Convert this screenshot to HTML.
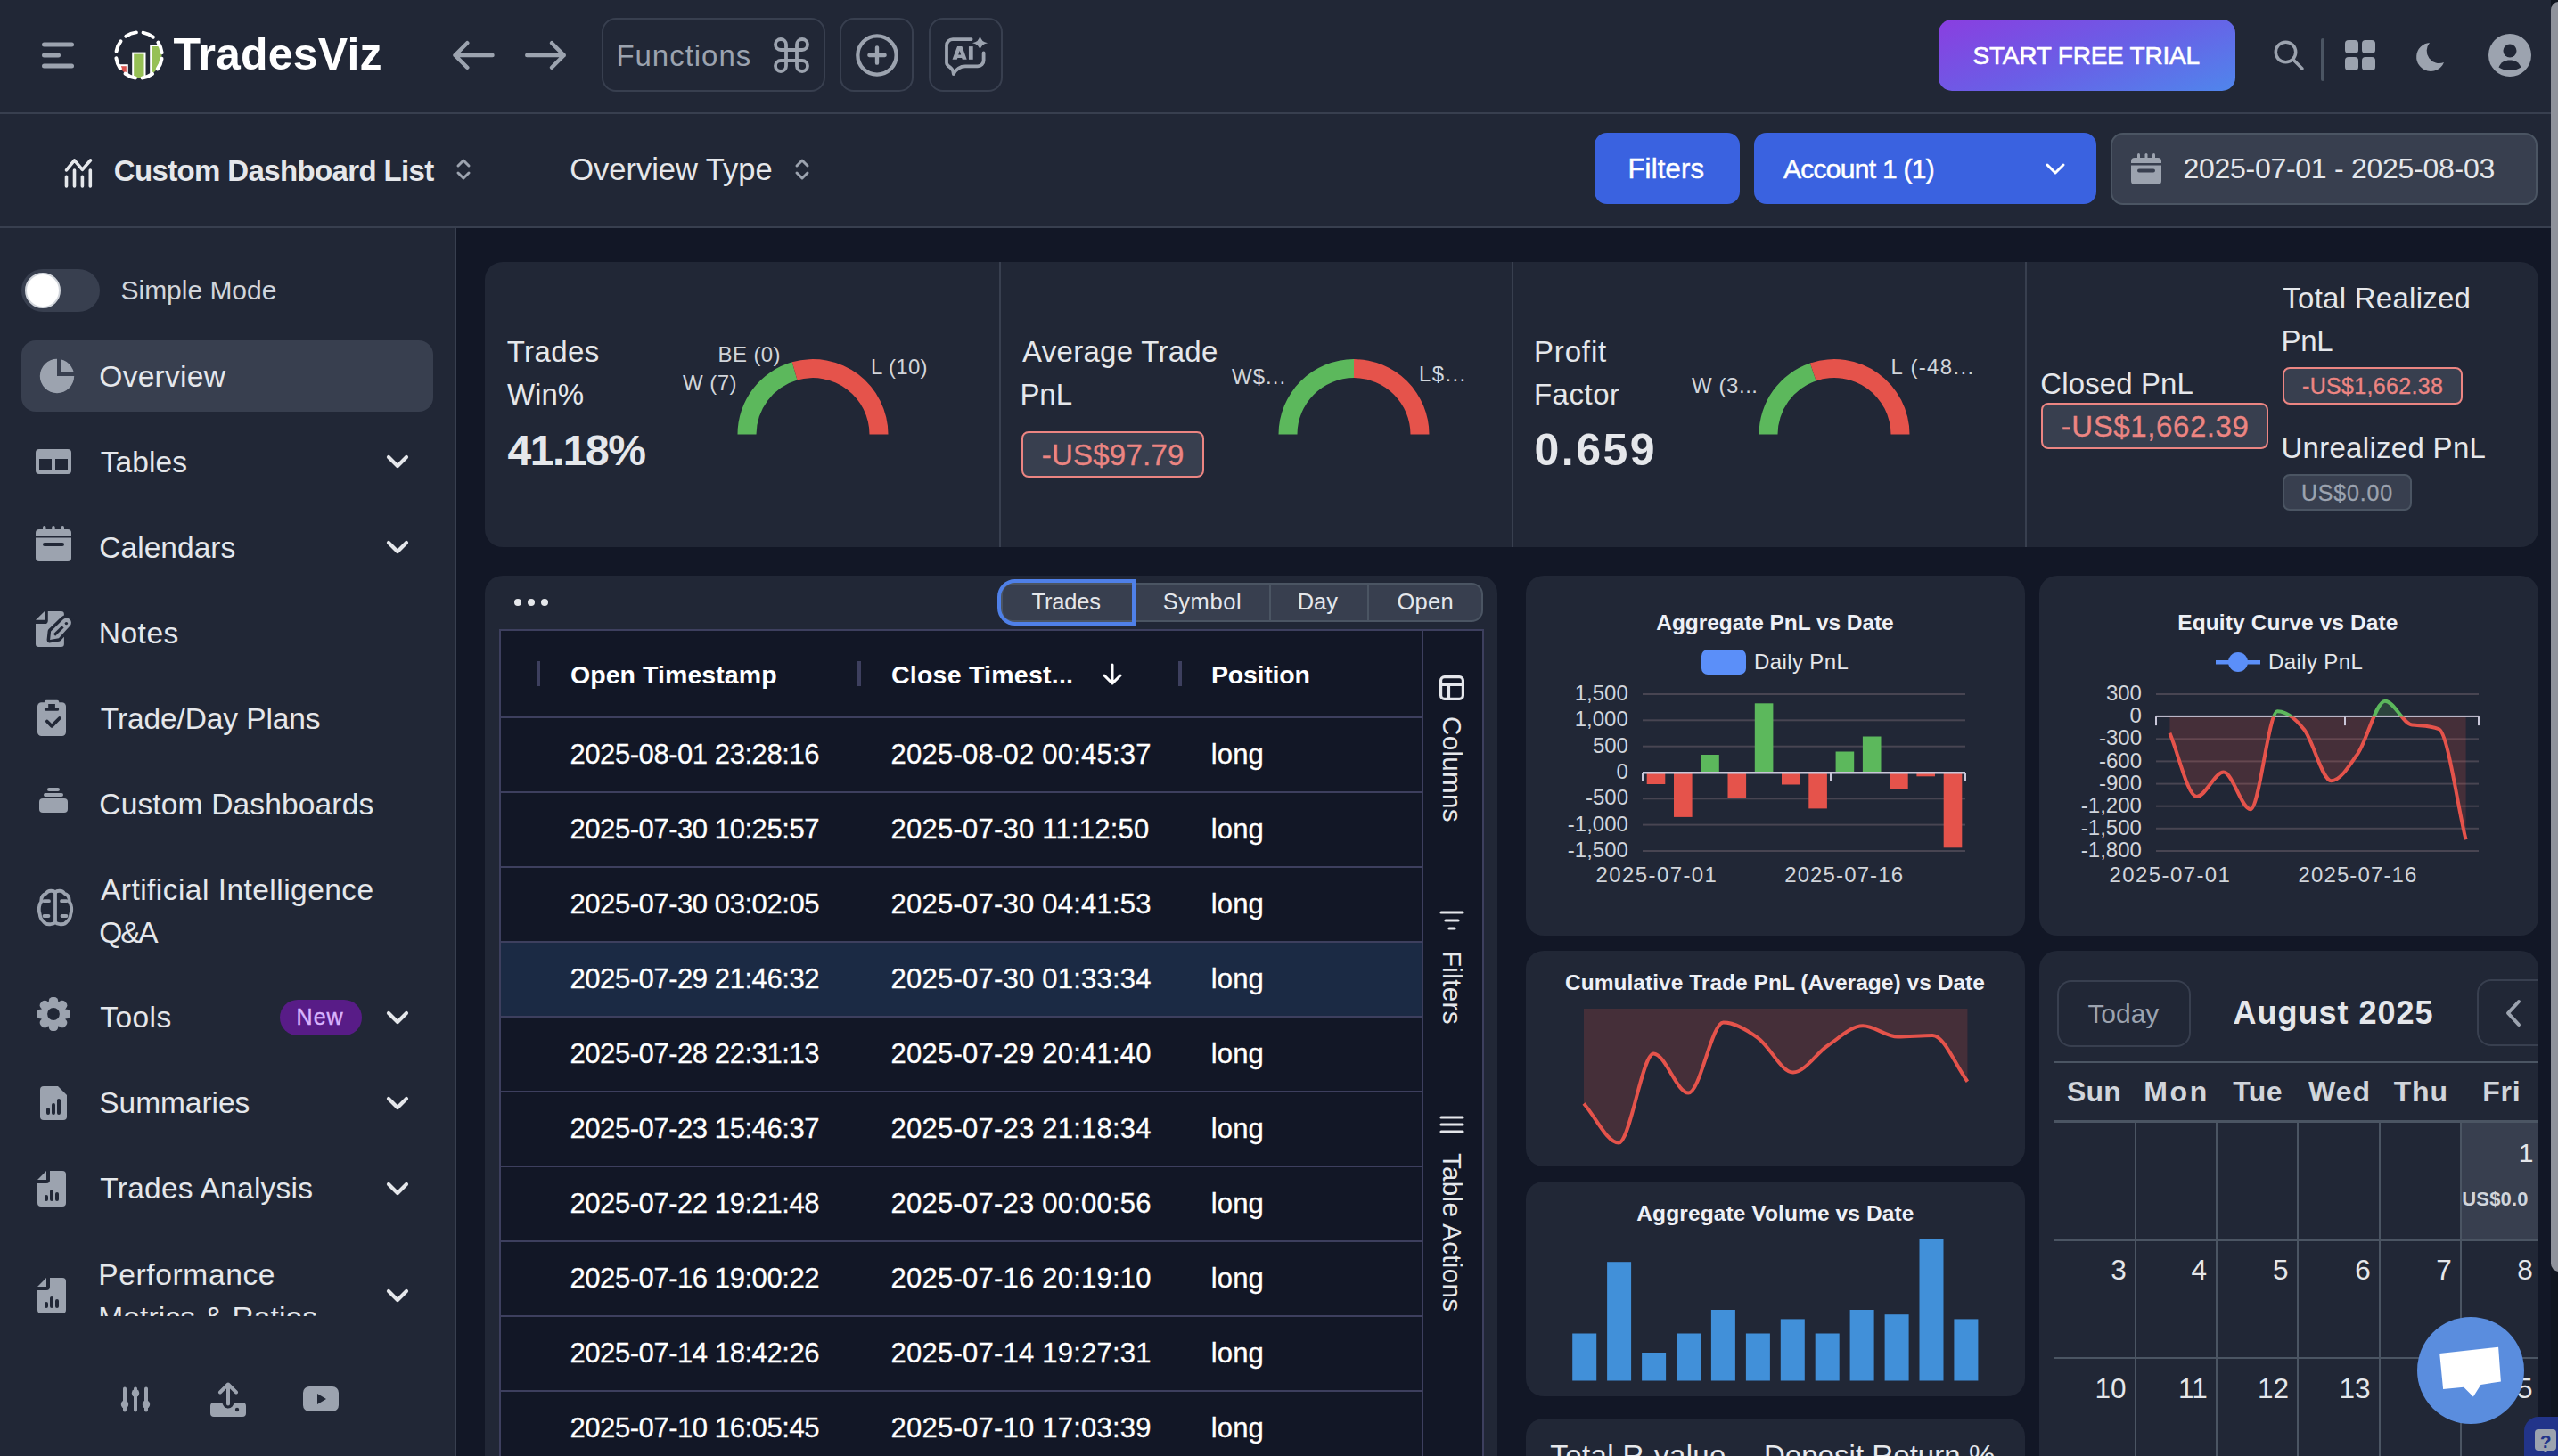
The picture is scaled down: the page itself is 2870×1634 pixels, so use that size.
<!DOCTYPE html>
<html><head><meta charset="utf-8"><title>TradesViz</title>
<style>
html,body{margin:0;padding:0;}
body{width:2870px;height:1634px;position:relative;overflow:hidden;background:#121726;font-family:'Liberation Sans', sans-serif;}
.t{position:absolute;white-space:nowrap;font-family:'Liberation Sans', sans-serif;}
svg{overflow:visible;}
</style></head><body>
<div style="position:absolute;left:0px;top:0px;width:2870px;height:126px;background:#212736;border-radius:0px;"></div>
<div style="position:absolute;left:0px;top:126px;width:2870px;height:2px;background:#383f4f;border-radius:0px;"></div>
<svg style="position:absolute;left:40px;top:40px;" width="50" height="44" viewBox="0 0 50 44"><g stroke="#9ca3af" stroke-width="5" stroke-linecap="round"><line x1="9.5" y1="10" x2="40.5" y2="10"/><line x1="9.5" y1="22" x2="25.5" y2="22"/><line x1="9.5" y1="34" x2="40.5" y2="34"/></g></svg>
<svg style="position:absolute;left:124px;top:30px;" width="64" height="64" viewBox="0 0 64 64">
<defs><clipPath id="lc"><circle cx="32" cy="32" r="25.5"/></clipPath></defs>
<g clip-path="url(#lc)">
<rect x="10.8" y="43.2" width="8" height="14" fill="#d9534f" stroke="#fff" stroke-width="2"/>
<rect x="25.2" y="29.6" width="13.3" height="32" fill="#96c055" stroke="#fff" stroke-width="2"/>
<rect x="45.2" y="21" width="14" height="40" fill="#96c055" stroke="#fff" stroke-width="2"/>
</g>
<circle cx="32" cy="32" r="25.8" fill="none" stroke="#fff" stroke-width="4" stroke-linecap="round" stroke-dasharray="12.3 7.96" stroke-dashoffset="16.28"/>
</svg>
<div class="t" style="left:194.5px;top:36.1px;font-size:50px;line-height:50px;color:#ffffff;font-weight:700;letter-spacing:0.19px;">TradesViz</div>
<svg style="position:absolute;left:500px;top:40px;" width="64" height="44" viewBox="0 0 64 44"><g stroke="#9ca3af" stroke-width="4.5" stroke-linecap="round" stroke-linejoin="round" fill="none"><path d="M52.5 22H10.5M24.25 8.25L10.5 22L24.25 35.75"/></g></svg>
<svg style="position:absolute;left:580px;top:40px;" width="64" height="44" viewBox="0 0 64 44"><g stroke="#9ca3af" stroke-width="4.5" stroke-linecap="round" stroke-linejoin="round" fill="none"><path d="M11.25 22H52.75M39 8.25L52.75 22L39 35.75"/></g></svg>
<div style="position:absolute;left:675px;top:20px;width:251px;height:83px;background:transparent;border-radius:16px;border:2px solid #383f4f;box-sizing:border-box;"></div>
<div class="t" style="left:691.4px;top:46.0px;font-size:33px;line-height:33px;color:#9ca3af;letter-spacing:0.97px;">Functions</div>
<svg style="position:absolute;left:864px;top:38px;" width="48" height="48" viewBox="0 0 24 24"><path d="M15 6v12a3 3 0 1 0 3-3H6a3 3 0 1 0 3 3V6a3 3 0 1 0-3 3h12a3 3 0 1 0-3-3" fill="none" stroke="#9ca3af" stroke-width="1.9" stroke-linecap="round" stroke-linejoin="round"/></svg>
<div style="position:absolute;left:942px;top:20px;width:83px;height:83px;background:transparent;border-radius:16px;border:2px solid #383f4f;box-sizing:border-box;"></div>
<svg style="position:absolute;left:958px;top:36px;" width="52" height="52" viewBox="0 0 24 24"><g fill="none" stroke="#9ca3af" stroke-width="2" stroke-linecap="round"><circle cx="12" cy="12" r="10"/><path d="M8 12h8M12 8v8"/></g></svg>
<div style="position:absolute;left:1042px;top:20px;width:83px;height:83px;background:transparent;border-radius:16px;border:2px solid #383f4f;box-sizing:border-box;"></div>
<svg style="position:absolute;left:1056px;top:38px;" width="56" height="48" viewBox="0 0 56 48"><path d="M33.6 6.05 H13 A7 7 0 0 0 6 13.05 V32.5 C6 35 8 36.2 10 37.5 C12.5 39.5 13.8 42 13.8 45 C16 41 20 36.3 27 36.3 H41 A6.6 6.6 0 0 0 47.6 29.7 V21.4" fill="none" stroke="#9ca3af" stroke-width="3.8" stroke-linecap="round" stroke-linejoin="round"/>
<path fill-rule="evenodd" d="M12.5 28.8 L18.05 14.1 L23.4 14.1 L28.7 28.8 L23.8 28.8 L23.1 26.9 L18.4 26.9 L17.7 28.8 Z M19.2 23.4 L20.7 18.9 L22.2 23.4 Z" fill="#9ca3af"/>
<rect x="30.95" y="14.1" width="4.75" height="14.7" fill="#9ca3af"/>
<path d="M43.5 1.6 Q44.5 9.3 52.1 10.3 Q44.5 11.3 43.5 19 Q42.5 11.3 34.9 10.3 Q42.5 9.3 43.5 1.6 Z" fill="#9ca3af"/></svg>
<div style="position:absolute;left:2175px;top:22px;width:333px;height:80px;background:linear-gradient(160deg,#8a3ee0 0%,#6a5ee6 50%,#4f86ec 100%);border-radius:15px;"></div>
<div class="t" style="left:2213.6px;top:48.7px;font-size:28px;line-height:28px;color:#ffffff;letter-spacing:-0.22px;-webkit-text-stroke:0.6px #fff;">START FREE TRIAL</div>
<svg style="position:absolute;left:2546px;top:40px;" width="44" height="44" viewBox="0 0 44 44"><g fill="none" stroke="#9ca3af" stroke-width="3.5" stroke-linecap="round"><circle cx="18.5" cy="18.5" r="11.2"/><path d="M27 27L37 37"/></g></svg>
<div style="position:absolute;left:2604px;top:43px;width:4px;height:48px;background:#4b5563;border-radius:2px;"></div>
<svg style="position:absolute;left:2631px;top:45px;" width="34" height="34" viewBox="0 0 34 34"><g fill="#9ca3af"><rect x="0" y="0" width="15" height="15" rx="4"/><rect x="19" y="0" width="15" height="15" rx="4"/><rect x="0" y="19" width="15" height="15" rx="4"/><rect x="19" y="19" width="15" height="15" rx="4"/></g></svg>
<svg style="position:absolute;left:2706px;top:44px;" width="40" height="38" viewBox="0 0 40 38"><path d="M20 4 A16 16 0 1 0 36 26 A14 14 0 0 1 20 4 Z" fill="#9ca3af"/></svg>
<svg style="position:absolute;left:2792px;top:38px;" width="48" height="48" viewBox="0 0 48 48"><circle cx="24" cy="24" r="24" fill="#9ca3af"/><circle cx="24" cy="19" r="7.5" fill="#212736"/><path d="M11.5 37.5 C14 31.5 18.5 29.5 24 29.5 C29.5 29.5 34 31.5 36.5 37.5 C33 40 28.5 41 24 41 C19.5 41 15 40 11.5 37.5Z" fill="#212736"/></svg>
<div style="position:absolute;left:0px;top:128px;width:2870px;height:126px;background:#212736;border-radius:0px;"></div>
<div style="position:absolute;left:0px;top:254px;width:2870px;height:2px;background:#383f4f;border-radius:0px;"></div>
<svg style="position:absolute;left:70px;top:176px;" width="36" height="36" viewBox="0 0 36 36"><g stroke="#e5e7eb" stroke-width="3.6" stroke-linecap="round" stroke-linejoin="round" fill="none"><path d="M4.5 32.9V22.4M13.5 32.9V15.1M22.4 32.9V22.4M31.3 32.9V15.1M4.5 14.8L13.5 3.8L22.4 14.4L31.6 3.8"/></g></svg>
<div class="t" style="left:127.7px;top:174.5px;font-size:33px;line-height:33px;color:#e5e7eb;font-weight:700;letter-spacing:-0.63px;">Custom Dashboard List</div>
<svg style="position:absolute;left:512px;top:177px;" width="16" height="26" viewBox="0 0 16 26"><g stroke="#9ca3af" stroke-width="3" stroke-linecap="round" stroke-linejoin="round" fill="none"><path d="M2 9L8 3L14 9M2 17L8 23L14 17"/></g></svg>
<div class="t" style="left:639.3px;top:173.3px;font-size:34.5px;line-height:34.5px;color:#e5e7eb;letter-spacing:-0.02px;">Overview Type</div>
<svg style="position:absolute;left:892px;top:177px;" width="16" height="26" viewBox="0 0 16 26"><g stroke="#9ca3af" stroke-width="3" stroke-linecap="round" stroke-linejoin="round" fill="none"><path d="M2 9L8 3L14 9M2 17L8 23L14 17"/></g></svg>
<div style="position:absolute;left:1789px;top:149px;width:163px;height:80px;background:#3a62e0;border-radius:14px;"></div>
<div class="t" style="left:1826.5px;top:173.7px;font-size:31px;line-height:31px;color:#ffffff;letter-spacing:0.18px;-webkit-text-stroke:0.5px #fff;">Filters</div>
<div style="position:absolute;left:1968px;top:149px;width:384px;height:80px;background:#3a62e0;border-radius:14px;"></div>
<div class="t" style="left:2001.0px;top:174.5px;font-size:30px;line-height:30px;color:#ffffff;letter-spacing:-0.72px;-webkit-text-stroke:0.5px #fff;">Account 1 (1)</div>
<svg style="position:absolute;left:2294px;top:180px;" width="24" height="20" viewBox="0 0 24 20"><path d="M3 5L12 14L21 5" fill="none" stroke="#fff" stroke-width="3" stroke-linecap="round" stroke-linejoin="round"/></svg>
<div style="position:absolute;left:2368px;top:149px;width:479px;height:81px;background:#383f4f;border-radius:14px;border:2px solid #4b5563;box-sizing:border-box;"></div>
<svg style="position:absolute;left:2391px;top:172px;" width="34" height="35" viewBox="0 0 34 35"><g fill="#9ca3af"><rect x="0" y="5" width="34" height="30" rx="4"/><rect x="7" y="0" width="3" height="8" rx="1.5"/><rect x="15.5" y="0" width="3" height="8" rx="1.5"/><rect x="24" y="0" width="3" height="8" rx="1.5"/></g><rect x="0" y="11" width="34" height="2.5" fill="#383f4f"/><rect x="7" y="17.5" width="20" height="4" rx="2" fill="#383f4f"/></svg>
<div class="t" style="left:2449.4px;top:172.5px;font-size:32px;line-height:32px;color:#e5e7eb;letter-spacing:-0.27px;">2025-07-01 - 2025-08-03</div>
<div style="position:absolute;left:0px;top:256px;width:510px;height:1378px;background:#212736;border-radius:0px;"></div>
<div style="position:absolute;left:510px;top:256px;width:2px;height:1378px;background:#383f4f;border-radius:0px;"></div>
<div style="position:absolute;left:24px;top:302px;width:88px;height:48px;background:#383f4f;border-radius:24px;"></div>
<div style="position:absolute;left:28px;top:306px;width:40px;height:40px;border-radius:50%;background:#fff;box-sizing:border-box;border:2px solid #d1d5db;"></div>
<div class="t" style="left:135.5px;top:310.8px;font-size:30px;line-height:30px;color:#d1d5db;letter-spacing:-0.02px;">Simple Mode</div>
<div style="position:absolute;left:24px;top:382px;width:462px;height:80px;background:#383f4f;border-radius:16px;"></div>
<svg style="position:absolute;left:45px;top:403px;" width="38" height="38" viewBox="0 0 38 38"><defs><clipPath id="pw"><rect x="23.9" y="-2" width="20" height="16.2"/></clipPath></defs><path d="M19 19 V-0.2 A19.2 19.2 0 1 0 38.2 19 Z" fill="#9ca3af"/><circle cx="19" cy="19" r="19.2" fill="#9ca3af" clip-path="url(#pw)"/></svg>
<div class="t" style="left:111.3px;top:405.5px;font-size:33.5px;line-height:33.5px;color:#e5e7eb;letter-spacing:0.28px;">Overview</div>
<div style="position:absolute;left:0;top:470px;width:510px;height:1007px;overflow:hidden;">
<svg style="position:absolute;left:40px;top:34px;" width="40" height="28" viewBox="0 0 40 28"><rect x="0" y="0" width="40" height="28" rx="4" fill="#9ca3af"/><rect x="4" y="11" width="14" height="13" fill="#212736"/><rect x="22" y="11" width="14" height="13" fill="#212736"/></svg>
<div class="t" style="left:112.8px;top:31.5px;font-size:33.5px;line-height:33.5px;color:#e5e7eb;letter-spacing:0.07px;">Tables</div>
<svg style="position:absolute;left:432px;top:38px;" width="28" height="20" viewBox="0 0 28 20"><path d="M4 5L14 15L24 5" fill="none" stroke="#e5e7eb" stroke-width="4.2" stroke-linecap="round" stroke-linejoin="round"/></svg>
<svg style="position:absolute;left:40px;top:120px;" width="40" height="40" viewBox="0 0 40 40"><g fill="#9ca3af"><rect x="0" y="4" width="40" height="36" rx="4"/><rect x="8" y="0" width="3.5" height="8" rx="1.7"/><rect x="18.2" y="0" width="3.5" height="8" rx="1.7"/><rect x="28.5" y="0" width="3.5" height="8" rx="1.7"/></g><rect x="0" y="11" width="40" height="2.5" fill="#212736"/><rect x="8" y="19" width="24" height="4" rx="2" fill="#212736"/></svg>
<div class="t" style="left:111.3px;top:128.1px;font-size:33.5px;line-height:33.5px;color:#e5e7eb;letter-spacing:0.03px;">Calendars</div>
<svg style="position:absolute;left:432px;top:134px;" width="28" height="20" viewBox="0 0 28 20"><path d="M4 5L14 15L24 5" fill="none" stroke="#e5e7eb" stroke-width="4.2" stroke-linecap="round" stroke-linejoin="round"/></svg>
<svg style="position:absolute;left:40px;top:216px;" width="42" height="42" viewBox="0 0 42 42"><path d="M0 9.8 L10 0 V9.8 Z" fill="#9ca3af"/><path d="M14 0 H28.6 A3.3 3.3 0 0 1 31.9 3.3 V36.7 A3.3 3.3 0 0 1 28.6 40 H3.3 A3.3 3.3 0 0 1 0 36.7 V14 H10.2 A3.6 3.6 0 0 0 13.8 10.4 V0 Z" fill="#9ca3af"/><path d="M16.1 31.9 L17.1 22.5 L31 9 A5.2 5.2 0 0 1 38.4 16.4 L25.9 30.2 Z" fill="#9ca3af" stroke="#212736" stroke-width="7" stroke-linejoin="round" paint-order="stroke"/><path d="M21 26.6 L30.5 17.4" stroke="#212736" stroke-width="3.2"/><circle cx="34.4" cy="13.6" r="1.7" fill="#212736"/></svg>
<div class="t" style="left:110.8px;top:223.5px;font-size:33.5px;line-height:33.5px;color:#e5e7eb;letter-spacing:0.49px;">Notes</div>
<svg style="position:absolute;left:42px;top:316px;" width="32" height="40" viewBox="0 0 32 40"><rect x="0" y="2.2" width="32" height="37.8" rx="4.5" fill="#9ca3af"/><rect x="7.9" y="-0.2" width="16.3" height="5" rx="2" fill="#9ca3af"/><rect x="12.2" y="4" width="7.7" height="5" fill="#212736"/><rect x="7.9" y="8" width="16.3" height="3.8" rx="1.9" fill="#212736"/><path d="M10.8 23.5L16.1 28.8L24.8 20" fill="none" stroke="#212736" stroke-width="3.8" stroke-linecap="round" stroke-linejoin="round"/></svg>
<div class="t" style="left:112.8px;top:319.5px;font-size:33.5px;line-height:33.5px;color:#e5e7eb;letter-spacing:-0.11px;">Trade/Day Plans</div>
<svg style="position:absolute;left:44px;top:414px;" width="32" height="28" viewBox="0 0 32 28"><g fill="#9ca3af"><rect x="9" y="0" width="14" height="4" rx="2"/><rect x="5" y="6" width="22" height="4" rx="2"/><rect x="0" y="12" width="32" height="16" rx="4"/></g></svg>
<div class="t" style="left:111.3px;top:415.5px;font-size:33.5px;line-height:33.5px;color:#e5e7eb;letter-spacing:0.16px;">Custom Dashboards</div>
<svg style="position:absolute;left:42px;top:528px;" width="40" height="40" viewBox="0 0 40 40"><g fill="none" stroke="#9ca3af" stroke-width="3.8" stroke-linecap="round" stroke-linejoin="round"><path d="M20 3.5 C18 1.2 12 0.8 9.8 4.6 C6 5.8 4 9.5 4.3 13.8 C1.6 17 1.2 24 2.6 27.5 C3 31 4.2 34 6.3 35.6 C8.3 38.6 12 39.6 15 39.1 C17.5 39 19 38.2 20 37.2"/><path d="M 20 3.5 C 22 1.2 28 0.8 30.2 4.6 C 34 5.8 36 9.5 35.7 13.8 C 38.4 17 38.8 24 37.4 27.5 C 37 31 35.8 34 33.7 35.6 C 31.7 38.6 28 39.6 25 39.1 C 22.5 39 21 38.2 20 37.2"/><path d="M20 3.5V37.2M7.5 13.2H13M7.5 30H12.5M32.5 13.2H27M32.5 30H27.5"/></g></svg>
<div class="t" style="left:113.0px;top:511.5px;font-size:33.5px;line-height:33.5px;color:#e5e7eb;letter-spacing:0.46px;">Artificial Intelligence</div>
<div class="t" style="left:111.3px;top:559.5px;font-size:33.5px;line-height:33.5px;color:#e5e7eb;letter-spacing:-2.21px;">Q&amp;A</div>
<svg style="position:absolute;left:41px;top:649px;" width="38" height="38" viewBox="0 0 38 38"><g fill="#9ca3af"><circle cx="19" cy="19" r="14.5"/><rect x="13.8" y="0" width="10.4" height="10" rx="4.2" transform="rotate(0 19 19)"/><rect x="13.8" y="0" width="10.4" height="10" rx="4.2" transform="rotate(45 19 19)"/><rect x="13.8" y="0" width="10.4" height="10" rx="4.2" transform="rotate(90 19 19)"/><rect x="13.8" y="0" width="10.4" height="10" rx="4.2" transform="rotate(135 19 19)"/><rect x="13.8" y="0" width="10.4" height="10" rx="4.2" transform="rotate(180 19 19)"/><rect x="13.8" y="0" width="10.4" height="10" rx="4.2" transform="rotate(225 19 19)"/><rect x="13.8" y="0" width="10.4" height="10" rx="4.2" transform="rotate(270 19 19)"/><rect x="13.8" y="0" width="10.4" height="10" rx="4.2" transform="rotate(315 19 19)"/></g><circle cx="19" cy="19" r="6.9" fill="#212736"/></svg>
<div class="t" style="left:112.3px;top:654.5px;font-size:33.5px;line-height:33.5px;color:#e5e7eb;letter-spacing:0.41px;">Tools</div>
<div style="position:absolute;left:314px;top:652px;width:92px;height:40px;border-radius:20px;background:#581c87;"></div>
<div class="t" style="left:332.6px;top:659.2px;font-size:25px;line-height:25px;color:#d8b4fe;letter-spacing:1.00px;-webkit-text-stroke:0.4px #d8b4fe;">New</div>
<svg style="position:absolute;left:432px;top:662px;" width="28" height="20" viewBox="0 0 28 20"><path d="M4 5L14 15L24 5" fill="none" stroke="#e5e7eb" stroke-width="4.2" stroke-linecap="round" stroke-linejoin="round"/></svg>
<svg style="position:absolute;left:45px;top:749px;" width="30" height="38" viewBox="0 0 30 38"><path d="M4 0 H20 L30 10 V34 A4 4 0 0 1 26 38 H4 A4 4 0 0 1 0 34 V4 A4 4 0 0 1 4 0 Z" fill="#9ca3af"/><g fill="#212736"><rect x="7" y="24" width="4" height="8" rx="2"/><rect x="13" y="19" width="4" height="13" rx="2"/><rect x="19" y="14" width="4" height="18" rx="2"/></g></svg>
<div class="t" style="left:111.3px;top:750.5px;font-size:33.5px;line-height:33.5px;color:#e5e7eb;letter-spacing:-0.06px;">Summaries</div>
<svg style="position:absolute;left:432px;top:758px;" width="28" height="20" viewBox="0 0 28 20"><path d="M4 5L14 15L24 5" fill="none" stroke="#e5e7eb" stroke-width="4.2" stroke-linecap="round" stroke-linejoin="round"/></svg>
<svg style="position:absolute;left:42px;top:844px;" width="32" height="40" viewBox="0 0 32 40"><path d="M0 10 L10 0 V10 Z" fill="#9ca3af"/><path d="M14 0 H28 A4 4 0 0 1 32 4 V36 A4 4 0 0 1 28 40 H4 A4 4 0 0 1 0 36 V14 H10 A4 4 0 0 0 14 10 Z" fill="#9ca3af"/><g fill="#212736"><rect x="8" y="27" width="4" height="7" rx="2"/><rect x="14" y="21" width="4" height="13" rx="2"/><rect x="20" y="24" width="4" height="10" rx="2"/></g></svg>
<div class="t" style="left:112.3px;top:847.0px;font-size:33.5px;line-height:33.5px;color:#e5e7eb;letter-spacing:0.25px;">Trades Analysis</div>
<svg style="position:absolute;left:432px;top:854px;" width="28" height="20" viewBox="0 0 28 20"><path d="M4 5L14 15L24 5" fill="none" stroke="#e5e7eb" stroke-width="4.2" stroke-linecap="round" stroke-linejoin="round"/></svg>
<svg style="position:absolute;left:42px;top:964px;" width="32" height="40" viewBox="0 0 32 40"><path d="M0 10 L10 0 V10 Z" fill="#9ca3af"/><path d="M14 0 H28 A4 4 0 0 1 32 4 V36 A4 4 0 0 1 28 40 H4 A4 4 0 0 1 0 36 V14 H10 A4 4 0 0 0 14 10 Z" fill="#9ca3af"/><g fill="#212736"><rect x="8" y="27" width="4" height="7" rx="2"/><rect x="14" y="21" width="4" height="13" rx="2"/><rect x="20" y="24" width="4" height="10" rx="2"/></g></svg>
<div class="t" style="left:110.3px;top:943.5px;font-size:33.5px;line-height:33.5px;color:#e5e7eb;letter-spacing:0.64px;">Performance</div>
<div class="t" style="left:110.3px;top:991.5px;font-size:33.5px;line-height:33.5px;color:#e5e7eb;letter-spacing:0.12px;">Metrics &amp; Ratios</div>
<svg style="position:absolute;left:432px;top:974px;" width="28" height="20" viewBox="0 0 28 20"><path d="M4 5L14 15L24 5" fill="none" stroke="#e5e7eb" stroke-width="4.2" stroke-linecap="round" stroke-linejoin="round"/></svg>
</div>
<svg style="position:absolute;left:134px;top:1554px;" width="36" height="32" viewBox="0 0 36 32"><g stroke="#9ca3af" stroke-width="4" stroke-linecap="round"><path d="M6 4.5V28.5M18 4.5V28.5M30 4.5V28.5"/></g><g fill="#9ca3af"><ellipse cx="6" cy="22" rx="4.2" ry="4.6"/><ellipse cx="18" cy="9.5" rx="4.2" ry="4.6"/><ellipse cx="30" cy="22" rx="4.2" ry="4.6"/></g></svg>
<svg style="position:absolute;left:236px;top:1550px;" width="40" height="41" viewBox="0 0 40 41"><path d="M0 28 A4 4 0 0 1 4 24 H13.5 A6.5 6.5 0 0 0 26.5 24 H36 A4 4 0 0 1 40 28 V36 A4 4 0 0 1 36 40 H4 A4 4 0 0 1 0 36 Z" fill="#9ca3af"/><circle cx="30" cy="32" r="2.2" fill="#212736"/><path d="M20 25.5V3.5M11 12.5L20 3.5L29 12.5" fill="none" stroke="#9ca3af" stroke-width="4" stroke-linecap="round" stroke-linejoin="round"/></svg>
<svg style="position:absolute;left:340px;top:1556px;" width="40" height="28" viewBox="0 0 40 28"><rect x="0" y="0" width="40" height="28" rx="7" fill="#9ca3af"/><path d="M16 8 L26 14 L16 20 Z" fill="#212736"/></svg>
<div style="position:absolute;left:512px;top:256px;width:2350px;height:1378px;background:#121726;border-radius:0px;"></div>
<div style="position:absolute;left:544px;top:294px;width:2304px;height:320px;background:#212736;border-radius:20px;"></div>
<div style="position:absolute;left:1121px;top:294px;width:2px;height:320px;background:#383f4f;border-radius:0px;"></div>
<div style="position:absolute;left:1696px;top:294px;width:2px;height:320px;background:#383f4f;border-radius:0px;"></div>
<div style="position:absolute;left:2272px;top:294px;width:2px;height:320px;background:#383f4f;border-radius:0px;"></div>
<div class="t" style="left:568.7px;top:377.9px;font-size:33px;line-height:33px;color:#e5e7eb;letter-spacing:0.41px;">Trades</div>
<div class="t" style="left:569.0px;top:425.6px;font-size:33px;line-height:33px;color:#e5e7eb;letter-spacing:-0.05px;">Win%</div>
<div class="t" style="left:569.5px;top:482.0px;font-size:48px;line-height:48px;color:#e5e7eb;font-weight:700;letter-spacing:-1.46px;">41.18%</div>
<svg style="position:absolute;left:0;top:0" width="2870" height="1634"><path d="M827.50 487.60 A84.5 84.5 0 0 1 888.71 406.37 L894.50 426.56 A63.5 63.5 0 0 0 848.50 487.60 Z" fill="#5cb85c"/><path d="M888.71 406.37 A84.5 84.5 0 0 1 996.50 487.60 L975.50 487.60 A63.5 63.5 0 0 0 894.50 426.56 Z" fill="#e5534b"/></svg>
<div class="t" style="left:805.6px;top:385.6px;font-size:24px;line-height:24px;color:#d1d5db;letter-spacing:0.39px;">BE (0)</div>
<div class="t" style="left:766.0px;top:418.4px;font-size:24px;line-height:24px;color:#d1d5db;letter-spacing:0.47px;">W (7)</div>
<div class="t" style="left:977.1px;top:400.3px;font-size:24px;line-height:24px;color:#d1d5db;letter-spacing:0.34px;">L (10)</div>
<div class="t" style="left:1147.0px;top:377.9px;font-size:33px;line-height:33px;color:#e5e7eb;letter-spacing:0.29px;">Average Trade</div>
<div class="t" style="left:1144.4px;top:425.6px;font-size:33px;line-height:33px;color:#e5e7eb;letter-spacing:-0.05px;">PnL</div>
<div style="position:absolute;left:1146px;top:484px;width:205px;height:52px;background:#383f4f;border-radius:8px;border:2px solid #ec8582;box-sizing:border-box;"></div>
<div class="t" style="left:1168.7px;top:493.6px;font-size:33px;line-height:33px;color:#ec8582;letter-spacing:0.24px;-webkit-text-stroke:0.3px #ec8582;">-US$97.79</div>
<svg style="position:absolute;left:0;top:0" width="2870" height="1634"><path d="M1434.50 487.60 A84.5 84.5 0 0 1 1519.00 403.10 L1519.00 424.10 A63.5 63.5 0 0 0 1455.50 487.60 Z" fill="#5cb85c"/><path d="M1519.00 403.10 A84.5 84.5 0 0 1 1603.50 487.60 L1582.50 487.60 A63.5 63.5 0 0 0 1519.00 424.10 Z" fill="#e5534b"/></svg>
<div class="t" style="left:1382.0px;top:410.6px;font-size:24px;line-height:24px;color:#d1d5db;letter-spacing:1.06px;">W$...</div>
<div class="t" style="left:1592.1px;top:407.6px;font-size:24px;line-height:24px;color:#d1d5db;letter-spacing:1.32px;">L$...</div>
<div class="t" style="left:1720.9px;top:377.9px;font-size:33px;line-height:33px;color:#e5e7eb;letter-spacing:0.87px;">Profit</div>
<div class="t" style="left:1720.9px;top:425.6px;font-size:33px;line-height:33px;color:#e5e7eb;letter-spacing:0.52px;">Factor</div>
<div class="t" style="left:1721.5px;top:480.3px;font-size:50px;line-height:50px;color:#e5e7eb;font-weight:700;letter-spacing:2.50px;">0.659</div>
<svg style="position:absolute;left:0;top:0" width="2870" height="1634"><path d="M1973.50 487.60 A84.5 84.5 0 0 1 2030.91 407.56 L2037.64 427.45 A63.5 63.5 0 0 0 1994.50 487.60 Z" fill="#5cb85c"/><path d="M2030.91 407.56 A84.5 84.5 0 0 1 2142.50 487.60 L2121.50 487.60 A63.5 63.5 0 0 0 2037.64 427.45 Z" fill="#e5534b"/></svg>
<div class="t" style="left:1898.0px;top:420.6px;font-size:24px;line-height:24px;color:#d1d5db;letter-spacing:0.56px;">W (3...</div>
<div class="t" style="left:2121.6px;top:399.6px;font-size:24px;line-height:24px;color:#d1d5db;letter-spacing:1.34px;">L (-48...</div>
<div class="t" style="left:2289.3px;top:413.9px;font-size:33px;line-height:33px;color:#e5e7eb;letter-spacing:0.11px;">Closed PnL</div>
<div style="position:absolute;left:2290px;top:452px;width:255px;height:52px;background:#383f4f;border-radius:8px;border:2px solid #ec8582;box-sizing:border-box;"></div>
<div class="t" style="left:2312.7px;top:461.9px;font-size:33px;line-height:33px;color:#ec8582;letter-spacing:0.60px;-webkit-text-stroke:0.3px #ec8582;">-US$1,662.39</div>
<div class="t" style="left:2561.3px;top:317.6px;font-size:33px;line-height:33px;color:#e5e7eb;letter-spacing:0.26px;">Total Realized</div>
<div class="t" style="left:2559.4px;top:365.9px;font-size:33px;line-height:33px;color:#e5e7eb;letter-spacing:-0.25px;">PnL</div>
<div style="position:absolute;left:2561px;top:412px;width:202px;height:42px;background:#383f4f;border-radius:8px;border:2px solid #ec8582;box-sizing:border-box;"></div>
<div class="t" style="left:2583.0px;top:420.8px;font-size:25px;line-height:25px;color:#ec8582;letter-spacing:0.34px;-webkit-text-stroke:0.3px #ec8582;">-US$1,662.38</div>
<div class="t" style="left:2559.4px;top:486.3px;font-size:33px;line-height:33px;color:#e5e7eb;letter-spacing:0.30px;">Unrealized PnL</div>
<div style="position:absolute;left:2561px;top:532px;width:145px;height:41px;background:#383f4f;border-radius:8px;border:2px solid #4b5563;box-sizing:border-box;"></div>
<div class="t" style="left:2582.0px;top:540.8px;font-size:25px;line-height:25px;color:#9ca3af;letter-spacing:0.79px;-webkit-text-stroke:0.3px #9ca3af;">US$0.00</div>
<div style="position:absolute;left:544px;top:646px;width:1136px;height:1028px;background:#212736;border-radius:20px;"></div>
<div style="position:absolute;left:577px;top:672px;width:8px;height:8px;border-radius:50%;background:#e5e7eb"></div>
<div style="position:absolute;left:592px;top:672px;width:8px;height:8px;border-radius:50%;background:#e5e7eb"></div>
<div style="position:absolute;left:607px;top:672px;width:8px;height:8px;border-radius:50%;background:#e5e7eb"></div>
<div style="position:absolute;left:1123px;top:654px;width:541px;height:44px;background:#383f4f;border-radius:13px;border:2px solid #4b5563;box-sizing:border-box;"></div>
<div style="position:absolute;left:1424px;top:656px;width:2px;height:40px;background:#4b5563;border-radius:0px;"></div>
<div style="position:absolute;left:1534px;top:656px;width:2px;height:40px;background:#4b5563;border-radius:0px;"></div>
<div style="position:absolute;left:1119px;top:650px;width:155px;height:52px;box-sizing:border-box;border:4px solid #4f80e8;border-radius:20px 0 0 20px;"></div>
<div class="t" style="left:1157.5px;top:663.3px;font-size:25.5px;line-height:25.5px;color:#e5e7eb;letter-spacing:-0.20px;">Trades</div>
<div class="t" style="left:1304.7px;top:663.3px;font-size:25.5px;line-height:25.5px;color:#e5e7eb;letter-spacing:0.58px;">Symbol</div>
<div class="t" style="left:1455.7px;top:663.3px;font-size:25.5px;line-height:25.5px;color:#e5e7eb;letter-spacing:-0.03px;">Day</div>
<div class="t" style="left:1567.4px;top:663.3px;font-size:25.5px;line-height:25.5px;color:#e5e7eb;letter-spacing:0.29px;">Open</div>
<div style="position:absolute;left:560px;top:706px;width:1105px;height:968px;background:#3d3f5e;border-radius:0px;"></div>
<div style="position:absolute;left:562px;top:708px;width:1033px;height:966px;background:#121726;border-radius:0px;"></div>
<div style="position:absolute;left:1597px;top:708px;width:66px;height:966px;background:#121726;border-radius:0px;"></div>
<div style="position:absolute;left:602px;top:742px;width:4px;height:28px;background:#3d3f5e;border-radius:0px;"></div>
<div style="position:absolute;left:962px;top:742px;width:4px;height:28px;background:#3d3f5e;border-radius:0px;"></div>
<div style="position:absolute;left:1322px;top:742px;width:4px;height:28px;background:#3d3f5e;border-radius:0px;"></div>
<div class="t" style="left:639.9px;top:742.6px;font-size:28.5px;line-height:28.5px;color:#ffffff;font-weight:700;letter-spacing:0.08px;">Open Timestamp</div>
<div class="t" style="left:999.9px;top:742.6px;font-size:28.5px;line-height:28.5px;color:#ffffff;font-weight:700;letter-spacing:0.25px;">Close Timest...</div>
<svg style="position:absolute;left:1234px;top:744px;" width="28" height="26" viewBox="0 0 28 26"><path d="M14 2V23M5 14L14 23L23 14" fill="none" stroke="#fff" stroke-width="3" stroke-linecap="round" stroke-linejoin="round"/></svg>
<div class="t" style="left:1359.0px;top:742.6px;font-size:28.5px;line-height:28.5px;color:#ffffff;font-weight:700;letter-spacing:-0.23px;">Position</div>
<div style="position:absolute;left:562px;top:804px;width:1033px;height:2px;background:#3d3f5e;border-radius:0px;"></div>
<div class="t" style="left:639.5px;top:831.1px;font-size:31px;line-height:31px;color:#ffffff;letter-spacing:-0.44px;-webkit-text-stroke:0.3px #fff;">2025-08-01 23:28:16</div>
<div class="t" style="left:999.5px;top:831.1px;font-size:31px;line-height:31px;color:#ffffff;letter-spacing:0.23px;-webkit-text-stroke:0.3px #fff;">2025-08-02 00:45:37</div>
<div class="t" style="left:1358.8px;top:831.1px;font-size:31px;line-height:31px;color:#ffffff;letter-spacing:0.15px;-webkit-text-stroke:0.3px #fff;">long</div>
<div style="position:absolute;left:562px;top:888px;width:1033px;height:2px;background:#3d3f5e;border-radius:0px;"></div>
<div class="t" style="left:639.5px;top:915.1px;font-size:31px;line-height:31px;color:#ffffff;letter-spacing:-0.44px;-webkit-text-stroke:0.3px #fff;">2025-07-30 10:25:57</div>
<div class="t" style="left:999.5px;top:915.1px;font-size:31px;line-height:31px;color:#ffffff;letter-spacing:0.23px;-webkit-text-stroke:0.3px #fff;">2025-07-30 11:12:50</div>
<div class="t" style="left:1358.8px;top:915.1px;font-size:31px;line-height:31px;color:#ffffff;letter-spacing:0.15px;-webkit-text-stroke:0.3px #fff;">long</div>
<div style="position:absolute;left:562px;top:972px;width:1033px;height:2px;background:#3d3f5e;border-radius:0px;"></div>
<div class="t" style="left:639.5px;top:999.1px;font-size:31px;line-height:31px;color:#ffffff;letter-spacing:-0.44px;-webkit-text-stroke:0.3px #fff;">2025-07-30 03:02:05</div>
<div class="t" style="left:999.5px;top:999.1px;font-size:31px;line-height:31px;color:#ffffff;letter-spacing:0.23px;-webkit-text-stroke:0.3px #fff;">2025-07-30 04:41:53</div>
<div class="t" style="left:1358.8px;top:999.1px;font-size:31px;line-height:31px;color:#ffffff;letter-spacing:0.15px;-webkit-text-stroke:0.3px #fff;">long</div>
<div style="position:absolute;left:562px;top:1056px;width:1033px;height:2px;background:#3d3f5e;border-radius:0px;"></div>
<div style="position:absolute;left:562px;top:1058px;width:1033px;height:82px;background:#1b2a44;border-radius:0px;"></div>
<div class="t" style="left:639.5px;top:1083.2px;font-size:31px;line-height:31px;color:#ffffff;letter-spacing:-0.44px;-webkit-text-stroke:0.3px #fff;">2025-07-29 21:46:32</div>
<div class="t" style="left:999.5px;top:1083.2px;font-size:31px;line-height:31px;color:#ffffff;letter-spacing:0.23px;-webkit-text-stroke:0.3px #fff;">2025-07-30 01:33:34</div>
<div class="t" style="left:1358.8px;top:1083.2px;font-size:31px;line-height:31px;color:#ffffff;letter-spacing:0.15px;-webkit-text-stroke:0.3px #fff;">long</div>
<div style="position:absolute;left:562px;top:1140px;width:1033px;height:2px;background:#3d3f5e;border-radius:0px;"></div>
<div class="t" style="left:639.5px;top:1167.2px;font-size:31px;line-height:31px;color:#ffffff;letter-spacing:-0.44px;-webkit-text-stroke:0.3px #fff;">2025-07-28 22:31:13</div>
<div class="t" style="left:999.5px;top:1167.2px;font-size:31px;line-height:31px;color:#ffffff;letter-spacing:0.23px;-webkit-text-stroke:0.3px #fff;">2025-07-29 20:41:40</div>
<div class="t" style="left:1358.8px;top:1167.2px;font-size:31px;line-height:31px;color:#ffffff;letter-spacing:0.15px;-webkit-text-stroke:0.3px #fff;">long</div>
<div style="position:absolute;left:562px;top:1224px;width:1033px;height:2px;background:#3d3f5e;border-radius:0px;"></div>
<div class="t" style="left:639.5px;top:1251.2px;font-size:31px;line-height:31px;color:#ffffff;letter-spacing:-0.44px;-webkit-text-stroke:0.3px #fff;">2025-07-23 15:46:37</div>
<div class="t" style="left:999.5px;top:1251.2px;font-size:31px;line-height:31px;color:#ffffff;letter-spacing:0.23px;-webkit-text-stroke:0.3px #fff;">2025-07-23 21:18:34</div>
<div class="t" style="left:1358.8px;top:1251.2px;font-size:31px;line-height:31px;color:#ffffff;letter-spacing:0.15px;-webkit-text-stroke:0.3px #fff;">long</div>
<div style="position:absolute;left:562px;top:1308px;width:1033px;height:2px;background:#3d3f5e;border-radius:0px;"></div>
<div class="t" style="left:639.5px;top:1335.2px;font-size:31px;line-height:31px;color:#ffffff;letter-spacing:-0.44px;-webkit-text-stroke:0.3px #fff;">2025-07-22 19:21:48</div>
<div class="t" style="left:999.5px;top:1335.2px;font-size:31px;line-height:31px;color:#ffffff;letter-spacing:0.23px;-webkit-text-stroke:0.3px #fff;">2025-07-23 00:00:56</div>
<div class="t" style="left:1358.8px;top:1335.2px;font-size:31px;line-height:31px;color:#ffffff;letter-spacing:0.15px;-webkit-text-stroke:0.3px #fff;">long</div>
<div style="position:absolute;left:562px;top:1392px;width:1033px;height:2px;background:#3d3f5e;border-radius:0px;"></div>
<div class="t" style="left:639.5px;top:1419.2px;font-size:31px;line-height:31px;color:#ffffff;letter-spacing:-0.44px;-webkit-text-stroke:0.3px #fff;">2025-07-16 19:00:22</div>
<div class="t" style="left:999.5px;top:1419.2px;font-size:31px;line-height:31px;color:#ffffff;letter-spacing:0.23px;-webkit-text-stroke:0.3px #fff;">2025-07-16 20:19:10</div>
<div class="t" style="left:1358.8px;top:1419.2px;font-size:31px;line-height:31px;color:#ffffff;letter-spacing:0.15px;-webkit-text-stroke:0.3px #fff;">long</div>
<div style="position:absolute;left:562px;top:1476px;width:1033px;height:2px;background:#3d3f5e;border-radius:0px;"></div>
<div class="t" style="left:639.5px;top:1503.2px;font-size:31px;line-height:31px;color:#ffffff;letter-spacing:-0.44px;-webkit-text-stroke:0.3px #fff;">2025-07-14 18:42:26</div>
<div class="t" style="left:999.5px;top:1503.2px;font-size:31px;line-height:31px;color:#ffffff;letter-spacing:0.23px;-webkit-text-stroke:0.3px #fff;">2025-07-14 19:27:31</div>
<div class="t" style="left:1358.8px;top:1503.2px;font-size:31px;line-height:31px;color:#ffffff;letter-spacing:0.15px;-webkit-text-stroke:0.3px #fff;">long</div>
<div style="position:absolute;left:562px;top:1560px;width:1033px;height:2px;background:#3d3f5e;border-radius:0px;"></div>
<div class="t" style="left:639.5px;top:1587.2px;font-size:31px;line-height:31px;color:#ffffff;letter-spacing:-0.44px;-webkit-text-stroke:0.3px #fff;">2025-07-10 16:05:45</div>
<div class="t" style="left:999.5px;top:1587.2px;font-size:31px;line-height:31px;color:#ffffff;letter-spacing:0.23px;-webkit-text-stroke:0.3px #fff;">2025-07-10 17:03:39</div>
<div class="t" style="left:1358.8px;top:1587.2px;font-size:31px;line-height:31px;color:#ffffff;letter-spacing:0.15px;-webkit-text-stroke:0.3px #fff;">long</div>
<svg style="position:absolute;left:1615px;top:758px;" width="28" height="28" viewBox="0 0 28 28"><g fill="none" stroke="#e5e7eb" stroke-width="3.2" stroke-linejoin="round"><rect x="1.6" y="1.6" width="24.8" height="24.8" rx="4"/><path d="M1.6 10.5H26.4M10.5 10.5V26.4"/></g></svg>
<div class="t" style="left:1629px;top:804px;font-size:29.5px;line-height:29.5px;color:#e5e7eb;letter-spacing:0.35px;transform-origin:0 0;transform:rotate(90deg) translate(0,-14.8px);">Columns</div>
<svg style="position:absolute;left:1614px;top:1020px;" width="30" height="28" viewBox="0 0 30 28"><g stroke="#e5e7eb" stroke-width="3.2" stroke-linecap="round"><path d="M3 4H27M8 13H22M12 22H18"/></g></svg>
<div class="t" style="left:1629px;top:1067px;font-size:29.5px;line-height:29.5px;color:#e5e7eb;letter-spacing:0.35px;transform-origin:0 0;transform:rotate(90deg) translate(0,-14.8px);">Filters</div>
<svg style="position:absolute;left:1614px;top:1251px;" width="30" height="22" viewBox="0 0 30 22"><g stroke="#e5e7eb" stroke-width="3.2" stroke-linecap="round"><path d="M3 3H27M3 11H27M3 19H27"/></g></svg>
<div class="t" style="left:1629px;top:1294px;font-size:29.5px;line-height:29.5px;color:#e5e7eb;letter-spacing:0.35px;transform-origin:0 0;transform:rotate(90deg) translate(0,-14.8px);">Table Actions</div>
<div style="position:absolute;left:1712px;top:646px;width:560px;height:404px;background:#212736;border-radius:20px;"></div>
<div class="t" style="left:1858.3px;top:687.2px;font-size:24.5px;line-height:24.5px;color:#eef0f6;font-weight:700;letter-spacing:-0.07px;">Aggregate PnL vs Date</div>
<div style="position:absolute;left:1909px;top:729px;width:50px;height:28px;background:#5b8ff9;border-radius:7px;"></div>
<div class="t" style="left:1968.1px;top:730.6px;font-size:24px;line-height:24px;color:#e5e7eb;letter-spacing:0.37px;">Daily PnL</div>
<div class="t" style="left:1766.7px;top:766.1px;font-size:24px;line-height:24px;color:#d1d5db;">1,500</div>
<div class="t" style="left:1766.7px;top:795.4px;font-size:24px;line-height:24px;color:#d1d5db;">1,000</div>
<div class="t" style="left:1786.9px;top:824.8px;font-size:24px;line-height:24px;color:#d1d5db;">500</div>
<div class="t" style="left:1813.5px;top:854.1px;font-size:24px;line-height:24px;color:#d1d5db;">0</div>
<div class="t" style="left:1779.0px;top:883.4px;font-size:24px;line-height:24px;color:#d1d5db;">-500</div>
<div class="t" style="left:1758.8px;top:912.8px;font-size:24px;line-height:24px;color:#d1d5db;">-1,000</div>
<div class="t" style="left:1758.8px;top:942.1px;font-size:24px;line-height:24px;color:#d1d5db;">-1,500</div>
<svg style="position:absolute;left:0;top:0" width="2870" height="1634"><rect x="1843" y="778.0" width="362" height="2" fill="#484552"/><rect x="1843" y="807.3" width="362" height="2" fill="#484552"/><rect x="1843" y="836.7" width="362" height="2" fill="#484552"/><rect x="1843" y="895.3" width="362" height="2" fill="#484552"/><rect x="1843" y="924.6" width="362" height="2" fill="#484552"/><rect x="1843" y="954.0" width="362" height="2" fill="#484552"/><rect x="1847.7" y="867.0" width="20.6" height="13.0" fill="#e5534b"/><rect x="1878.0" y="867.0" width="20.6" height="49.9" fill="#e5534b"/><rect x="1908.2" y="847.0" width="20.6" height="19.9" fill="#5cb85c"/><rect x="1938.5" y="867.0" width="20.6" height="28.8" fill="#e5534b"/><rect x="1968.8" y="789.3" width="20.6" height="77.7" fill="#5cb85c"/><rect x="1999.0" y="867.0" width="20.6" height="13.5" fill="#e5534b"/><rect x="2029.3" y="867.0" width="20.6" height="40.4" fill="#e5534b"/><rect x="2059.6" y="843.5" width="20.6" height="23.5" fill="#5cb85c"/><rect x="2089.9" y="826.5" width="20.6" height="40.5" fill="#5cb85c"/><rect x="2120.1" y="867.0" width="20.6" height="18.5" fill="#e5534b"/><rect x="2150.4" y="867.0" width="20.6" height="4.3" fill="#e5534b"/><rect x="2180.7" y="867.0" width="20.6" height="84.3" fill="#e5534b"/><rect x="1843" y="866.0" width="362" height="2.5" fill="#c9c7d9"/><rect x="1842" y="867.0" width="2" height="10" fill="#c9c7d9"/><rect x="2053" y="867.0" width="2" height="10" fill="#c9c7d9"/><rect x="2204" y="867.0" width="2" height="10" fill="#c9c7d9"/></svg>
<div class="t" style="left:1790.6px;top:970.1px;font-size:24px;line-height:24px;color:#d1d5db;letter-spacing:1.39px;">2025-07-01</div>
<div class="t" style="left:2002.2px;top:970.1px;font-size:24px;line-height:24px;color:#d1d5db;letter-spacing:1.12px;">2025-07-16</div>
<div style="position:absolute;left:2288px;top:646px;width:560px;height:404px;background:#212736;border-radius:20px;"></div>
<div class="t" style="left:2443.2px;top:687.2px;font-size:24.5px;line-height:24.5px;color:#eef0f6;font-weight:700;letter-spacing:0.11px;">Equity Curve vs Date</div>
<svg style="position:absolute;left:2484px;top:731px;" width="54" height="24" viewBox="0 0 54 24"><rect x="2" y="10" width="50" height="4.5" fill="#5b8ff9"/><circle cx="27" cy="12" r="11" fill="#5b8ff9"/></svg>
<div class="t" style="left:2545.1px;top:730.6px;font-size:24px;line-height:24px;color:#e5e7eb;letter-spacing:0.37px;">Daily PnL</div>
<div class="t" style="left:2362.9px;top:766.1px;font-size:24px;line-height:24px;color:#d1d5db;">300</div>
<div class="t" style="left:2389.5px;top:791.2px;font-size:24px;line-height:24px;color:#d1d5db;">0</div>
<div class="t" style="left:2355.0px;top:816.4px;font-size:24px;line-height:24px;color:#d1d5db;">-300</div>
<div class="t" style="left:2355.0px;top:841.5px;font-size:24px;line-height:24px;color:#d1d5db;">-600</div>
<div class="t" style="left:2355.0px;top:866.7px;font-size:24px;line-height:24px;color:#d1d5db;">-900</div>
<div class="t" style="left:2334.8px;top:891.8px;font-size:24px;line-height:24px;color:#d1d5db;">-1,200</div>
<div class="t" style="left:2334.8px;top:916.9px;font-size:24px;line-height:24px;color:#d1d5db;">-1,500</div>
<div class="t" style="left:2334.8px;top:942.1px;font-size:24px;line-height:24px;color:#d1d5db;">-1,800</div>
<svg style="position:absolute;left:0;top:0" width="2870" height="1634"><rect x="2419" y="778.0" width="362" height="2" fill="#484552"/><rect x="2419" y="828.3" width="362" height="2" fill="#484552"/><rect x="2419" y="853.4" width="362" height="2" fill="#484552"/><rect x="2419" y="878.6" width="362" height="2" fill="#484552"/><rect x="2419" y="903.7" width="362" height="2" fill="#484552"/><rect x="2419" y="928.8" width="362" height="2" fill="#484552"/><rect x="2419" y="954.0" width="362" height="2" fill="#484552"/><defs><clipPath id="eqb"><rect x="2300" y="804.14" width="540" height="300"/></clipPath><clipPath id="eqa"><rect x="2300" y="700" width="540" height="104.14"/></clipPath></defs><path d="M2434.40 822.73 C2444.47 846.50 2454.53 894.03 2464.60 894.03 C2474.67 894.03 2484.73 866.55 2494.80 866.55 C2504.87 866.55 2514.93 908.15 2525.00 908.15 C2535.07 908.15 2545.13 798.22 2555.20 798.22 C2565.27 798.22 2575.33 806.02 2585.40 819.02 C2595.47 832.02 2605.53 876.21 2615.60 876.21 C2625.67 876.21 2635.73 859.94 2645.80 845.01 C2655.87 830.09 2665.93 786.64 2676.00 786.64 C2686.07 786.64 2696.13 812.39 2706.20 813.52 C2716.27 814.66 2726.33 813.66 2736.40 818.28 C2746.47 822.89 2756.53 900.97 2766.60 942.31 L2766.60 804.14 L2434.40 804.14 Z" fill="rgba(229,83,75,0.19)" clip-path="url(#eqb)"/><path d="M2434.40 822.73 C2444.47 846.50 2454.53 894.03 2464.60 894.03 C2474.67 894.03 2484.73 866.55 2494.80 866.55 C2504.87 866.55 2514.93 908.15 2525.00 908.15 C2535.07 908.15 2545.13 798.22 2555.20 798.22 C2565.27 798.22 2575.33 806.02 2585.40 819.02 C2595.47 832.02 2605.53 876.21 2615.60 876.21 C2625.67 876.21 2635.73 859.94 2645.80 845.01 C2655.87 830.09 2665.93 786.64 2676.00 786.64 C2686.07 786.64 2696.13 812.39 2706.20 813.52 C2716.27 814.66 2726.33 813.66 2736.40 818.28 C2746.47 822.89 2756.53 900.97 2766.60 942.31 L2766.60 804.14 L2434.40 804.14 Z" fill="rgba(92,184,92,0.2)" clip-path="url(#eqa)"/><rect x="2419" y="802.9" width="362" height="2" fill="#c9c7d9"/><rect x="2418" y="804.1" width="2" height="10" fill="#c9c7d9"/><rect x="2630" y="804.1" width="2" height="10" fill="#c9c7d9"/><rect x="2780" y="804.1" width="2" height="10" fill="#c9c7d9"/><path d="M2434.40 822.73 C2444.47 846.50 2454.53 894.03 2464.60 894.03 C2474.67 894.03 2484.73 866.55 2494.80 866.55 C2504.87 866.55 2514.93 908.15 2525.00 908.15 C2535.07 908.15 2545.13 798.22 2555.20 798.22 C2565.27 798.22 2575.33 806.02 2585.40 819.02 C2595.47 832.02 2605.53 876.21 2615.60 876.21 C2625.67 876.21 2635.73 859.94 2645.80 845.01 C2655.87 830.09 2665.93 786.64 2676.00 786.64 C2686.07 786.64 2696.13 812.39 2706.20 813.52 C2716.27 814.66 2726.33 813.66 2736.40 818.28 C2746.47 822.89 2756.53 900.97 2766.60 942.31" fill="none" stroke="#e5534b" stroke-width="4" clip-path="url(#eqb)"/><path d="M2434.40 822.73 C2444.47 846.50 2454.53 894.03 2464.60 894.03 C2474.67 894.03 2484.73 866.55 2494.80 866.55 C2504.87 866.55 2514.93 908.15 2525.00 908.15 C2535.07 908.15 2545.13 798.22 2555.20 798.22 C2565.27 798.22 2575.33 806.02 2585.40 819.02 C2595.47 832.02 2605.53 876.21 2615.60 876.21 C2625.67 876.21 2635.73 859.94 2645.80 845.01 C2655.87 830.09 2665.93 786.64 2676.00 786.64 C2686.07 786.64 2696.13 812.39 2706.20 813.52 C2716.27 814.66 2726.33 813.66 2736.40 818.28 C2746.47 822.89 2756.53 900.97 2766.60 942.31" fill="none" stroke="#5cb85c" stroke-width="4" clip-path="url(#eqa)"/></svg>
<div class="t" style="left:2366.6px;top:970.1px;font-size:24px;line-height:24px;color:#d1d5db;letter-spacing:1.39px;">2025-07-01</div>
<div class="t" style="left:2578.5px;top:970.1px;font-size:24px;line-height:24px;color:#d1d5db;letter-spacing:1.12px;">2025-07-16</div>
<div style="position:absolute;left:1712px;top:1067px;width:560px;height:242px;background:#212736;border-radius:20px;"></div>
<div class="t" style="left:1756.0px;top:1091.2px;font-size:24.5px;line-height:24.5px;color:#eef0f6;font-weight:700;letter-spacing:0.03px;">Cumulative Trade PnL (Average) vs Date</div>
<svg style="position:absolute;left:0;top:0" width="2870" height="1634"><path d="M1777.00 1238.50 C1790.04 1253.20 1803.09 1282.59 1816.13 1282.59 C1829.17 1282.59 1842.22 1182.47 1855.26 1182.47 C1868.30 1182.47 1881.35 1226.56 1894.39 1226.56 C1907.43 1226.56 1920.48 1147.56 1933.52 1147.56 C1946.56 1147.56 1959.61 1155.67 1972.65 1165.01 C1985.69 1174.35 1998.74 1203.59 2011.78 1203.59 C2024.82 1203.59 2037.87 1182.01 2050.91 1173.28 C2063.95 1164.55 2077.00 1151.23 2090.04 1151.23 C2103.08 1151.23 2116.13 1163.54 2129.17 1163.54 C2142.21 1163.54 2155.26 1161.89 2168.30 1161.89 C2181.34 1161.89 2194.39 1196.43 2207.43 1213.70 L2207.43 1132 L1777.00 1132 Z" fill="rgba(229,83,75,0.19)"/><path d="M1777.00 1238.50 C1790.04 1253.20 1803.09 1282.59 1816.13 1282.59 C1829.17 1282.59 1842.22 1182.47 1855.26 1182.47 C1868.30 1182.47 1881.35 1226.56 1894.39 1226.56 C1907.43 1226.56 1920.48 1147.56 1933.52 1147.56 C1946.56 1147.56 1959.61 1155.67 1972.65 1165.01 C1985.69 1174.35 1998.74 1203.59 2011.78 1203.59 C2024.82 1203.59 2037.87 1182.01 2050.91 1173.28 C2063.95 1164.55 2077.00 1151.23 2090.04 1151.23 C2103.08 1151.23 2116.13 1163.54 2129.17 1163.54 C2142.21 1163.54 2155.26 1161.89 2168.30 1161.89 C2181.34 1161.89 2194.39 1196.43 2207.43 1213.70" fill="none" stroke="#e5534b" stroke-width="4"/></svg>
<div style="position:absolute;left:1712px;top:1326px;width:560px;height:241px;background:#212736;border-radius:20px;"></div>
<div class="t" style="left:1836.3px;top:1350.2px;font-size:24.5px;line-height:24.5px;color:#eef0f6;font-weight:700;letter-spacing:0.11px;">Aggregate Volume vs Date</div>
<svg style="position:absolute;left:0;top:0" width="2870" height="1634"><rect x="1764.2" y="1496.5" width="27" height="53.0" fill="#4190d9"/><rect x="1803.1" y="1416.2" width="27" height="133.3" fill="#4190d9"/><rect x="1842.1" y="1518.0" width="27" height="31.5" fill="#4190d9"/><rect x="1881.0" y="1496.5" width="27" height="53.0" fill="#4190d9"/><rect x="1919.9" y="1470.0" width="27" height="79.5" fill="#4190d9"/><rect x="1958.9" y="1496.5" width="27" height="53.0" fill="#4190d9"/><rect x="1997.8" y="1480.4" width="27" height="69.1" fill="#4190d9"/><rect x="2036.7" y="1496.5" width="27" height="53.0" fill="#4190d9"/><rect x="2075.6" y="1470.0" width="27" height="79.5" fill="#4190d9"/><rect x="2114.6" y="1475.2" width="27" height="74.3" fill="#4190d9"/><rect x="2153.5" y="1390.2" width="27" height="159.3" fill="#4190d9"/><rect x="2192.4" y="1480.4" width="27" height="69.1" fill="#4190d9"/></svg>
<div style="position:absolute;left:1712px;top:1592px;width:560px;height:82px;background:#212736;border-radius:20px;"></div>
<div class="t" style="left:1739.3px;top:1616.5px;font-size:33px;line-height:33px;color:#e5e7eb;letter-spacing:0.38px;">Total R-value</div>
<div class="t" style="left:1978.9px;top:1616.5px;font-size:33px;line-height:33px;color:#e5e7eb;letter-spacing:0.05px;">Deposit Return %</div>
<div style="position:absolute;left:2288px;top:1067px;width:560px;height:620px;background:#212736;border-radius:20px;overflow:hidden;">
<div style="position:absolute;left:20px;top:33px;width:150px;height:75px;background:transparent;border-radius:16px;border:2px solid #383f4f;box-sizing:border-box;"></div>
<div class="t" style="left:54.4px;top:55.5px;font-size:30px;line-height:30px;color:#9ca3af;letter-spacing:-0.02px;">Today</div>
<div class="t" style="left:217.5px;top:51.9px;font-size:36px;line-height:36px;color:#e5e7eb;font-weight:700;letter-spacing:1.00px;">August 2025</div>
<div style="position:absolute;left:491px;top:32px;width:121px;height:75px;background:transparent;border-radius:16px;border:2px solid #383f4f;box-sizing:border-box;"></div>
<svg style="position:absolute;left:520px;top:53px" width="24" height="34"><path d="M18 4L6 17L18 30" fill="none" stroke="#9ca3af" stroke-width="4" stroke-linecap="round" stroke-linejoin="round"/></svg>
<div style="position:absolute;left:16px;top:124px;width:596px;height:2px;background:#4b5563;border-radius:0px;"></div>
<div class="t" style="left:31.0px;top:142.3px;font-size:32px;line-height:32px;color:#d1d5db;font-weight:700;letter-spacing:0.20px;">Sun</div>
<div class="t" style="left:117.3px;top:142.3px;font-size:32px;line-height:32px;color:#d1d5db;font-weight:700;letter-spacing:2.62px;">Mon</div>
<div class="t" style="left:217.2px;top:142.3px;font-size:32px;line-height:32px;color:#d1d5db;font-weight:700;letter-spacing:0.44px;">Tue</div>
<div class="t" style="left:302.0px;top:142.3px;font-size:32px;line-height:32px;color:#d1d5db;font-weight:700;letter-spacing:1.02px;">Wed</div>
<div class="t" style="left:397.7px;top:142.3px;font-size:32px;line-height:32px;color:#d1d5db;font-weight:700;letter-spacing:0.84px;">Thu</div>
<div class="t" style="left:497.3px;top:142.3px;font-size:32px;line-height:32px;color:#d1d5db;font-weight:700;letter-spacing:0.76px;">Fri</div>
<div style="position:absolute;left:16px;top:190px;width:596px;height:3px;background:#4b5563;border-radius:0px;"></div>
<div style="position:absolute;left:473px;top:193px;width:139px;height:131px;background:#383f4f;border-radius:0px;"></div>
<div style="position:absolute;left:107px;top:193px;width:2px;height:440px;background:#4b5563;border-radius:0px;"></div>
<div style="position:absolute;left:198px;top:193px;width:2px;height:440px;background:#4b5563;border-radius:0px;"></div>
<div style="position:absolute;left:289px;top:193px;width:2px;height:440px;background:#4b5563;border-radius:0px;"></div>
<div style="position:absolute;left:381px;top:193px;width:2px;height:440px;background:#4b5563;border-radius:0px;"></div>
<div style="position:absolute;left:472px;top:193px;width:2px;height:440px;background:#4b5563;border-radius:0px;"></div>
<div style="position:absolute;left:16px;top:324px;width:596px;height:2px;background:#4b5563;border-radius:0px;"></div>
<div style="position:absolute;left:16px;top:456px;width:596px;height:2px;background:#4b5563;border-radius:0px;"></div>
<div class="t" style="left:537.7px;top:212.2px;font-size:30px;line-height:30px;color:#e5e7eb;">1</div>
<div class="t" style="left:474.3px;top:267.9px;font-size:22px;line-height:22px;color:#d1d5db;font-weight:700;letter-spacing:0.14px;">US$0.0</div>
<div class="t" style="left:80.2px;top:343.2px;font-size:31.5px;line-height:31.5px;color:#e5e7eb;">3</div>
<div class="t" style="left:170.6px;top:343.2px;font-size:31.5px;line-height:31.5px;color:#e5e7eb;">4</div>
<div class="t" style="left:261.9px;top:343.2px;font-size:31.5px;line-height:31.5px;color:#e5e7eb;">5</div>
<div class="t" style="left:354.2px;top:343.2px;font-size:31.5px;line-height:31.5px;color:#e5e7eb;">6</div>
<div class="t" style="left:445.2px;top:343.2px;font-size:31.5px;line-height:31.5px;color:#e5e7eb;">7</div>
<div class="t" style="left:536.2px;top:343.2px;font-size:31.5px;line-height:31.5px;color:#e5e7eb;">8</div>
<div class="t" style="left:62.6px;top:475.7px;font-size:31.5px;line-height:31.5px;color:#e5e7eb;">10</div>
<div class="t" style="left:156.1px;top:475.7px;font-size:31.5px;line-height:31.5px;color:#e5e7eb;">11</div>
<div class="t" style="left:244.9px;top:475.7px;font-size:31.5px;line-height:31.5px;color:#e5e7eb;">12</div>
<div class="t" style="left:336.6px;top:475.7px;font-size:31.5px;line-height:31.5px;color:#e5e7eb;">13</div>
<div class="t" style="left:431.3px;top:475.7px;font-size:31.5px;line-height:31.5px;color:#e5e7eb;">14</div>
<div class="t" style="left:518.6px;top:475.7px;font-size:31.5px;line-height:31.5px;color:#e5e7eb;">15</div>
</div>
<div style="position:absolute;left:2712px;top:1478px;width:120px;height:120px;border-radius:50%;background:#5a8dde;"></div>
<svg style="position:absolute;left:2734px;top:1508px;" width="76" height="64" viewBox="0 0 76 64"><path d="M3.2 11 L69.1 3.7 L71.9 42.6 L49.4 45.9 L40.9 59.5 L30.2 48.7 L7.1 51 Z" fill="#fff"/></svg>
<div style="position:absolute;left:2862px;top:0px;width:8px;height:1634px;background:#10151f;border-radius:0px;"></div>
<div style="position:absolute;left:2862px;top:2px;width:18px;height:1425px;background:#8f929b;border-radius:9px;"></div>
<div style="position:absolute;left:2832px;top:1590px;width:40px;height:50px;background:#22348a;border-radius:16px 0 0 0;"></div>
<div style="position:absolute;left:2844px;top:1604px;width:24px;height:24px;background:#9ca3af;border-radius:4px;"></div>
<svg style="position:absolute;left:2852px;top:1626px;" width="8" height="5" viewBox="0 0 8 5"><path d="M0 0 L4 4 L8 0 Z" fill="#9ca3af"/></svg>
<div class="t" style="left:2849.7px;top:1606.7px;font-size:21px;line-height:21px;color:#22348a;font-weight:700;">?</div>
</body></html>
